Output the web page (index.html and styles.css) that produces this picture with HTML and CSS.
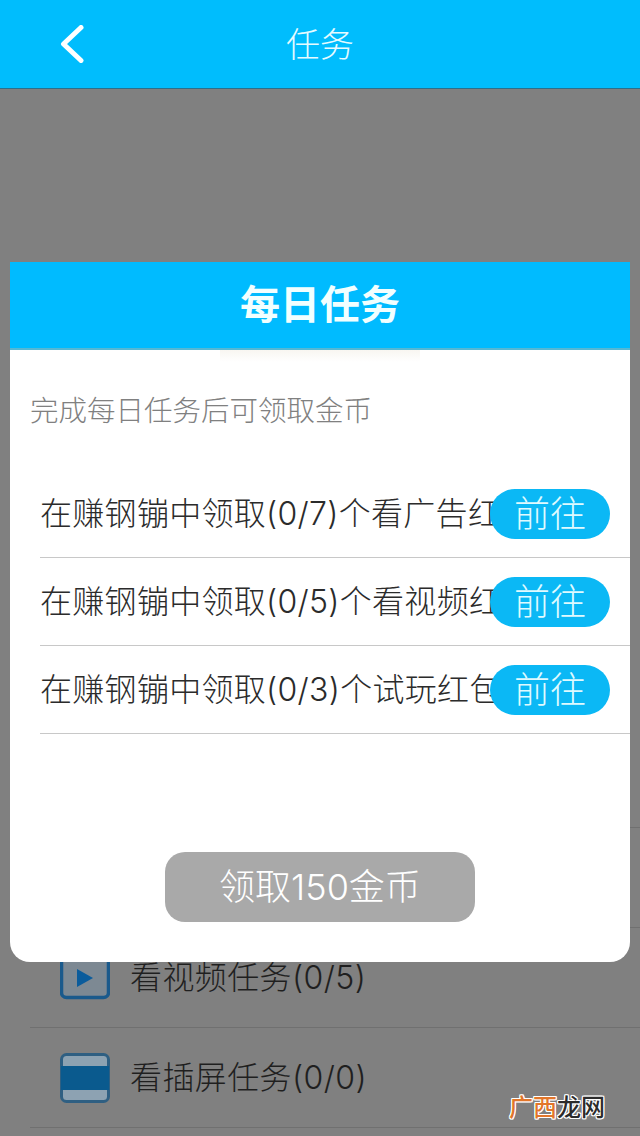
FILE: index.html
```html
<!DOCTYPE html>
<html lang="zh">
<head>
<meta charset="utf-8">
<title>任务</title>
<link rel="stylesheet" href="styles.css">
</head>
<body>
<div class="page">
  <header class="nav">
    <svg class="nav-back" width="24" height="38" viewBox="0 0 24 38"><path d="M21 2.5 3.5 19 21 35.500" fill="none" stroke="#fff" stroke-width="5" stroke-linecap="round" stroke-linejoin="round"/></svg>
    <h1 class="nav-title">任务</h1>
  </header>
  <div class="spacer"></div>
  <div class="task-row"><span class="task-label">看广告任务(0/7)</span></div>
  <div class="task-row">
    <svg class="task-icon" width="50" height="50" viewBox="0 0 50 50"><rect x="1.500" y="-3" width="47" height="47.500" rx="5" fill="#7d8993" stroke="#1a5a8c" stroke-width="3.500"/><path d="M17 16v18l16-9z" fill="#0a5c9c"/></svg>
    <span class="task-label">看视频任务(0/5)</span>
  </div>
  <div class="task-row">
    <svg class="task-icon" width="50" height="50" viewBox="0 0 50 50"><rect x="1.500" y="1.500" width="47" height="47" rx="5" fill="#8da2b2" stroke="#2f5f82" stroke-width="3"/><rect x="1" y="13" width="48" height="24" fill="#0a5a8e"/></svg>
    <span class="task-label">看插屏任务(0/0)</span>
  </div>
  <section class="modal">
    <h2 class="modal-head">每日任务</h2>
    <p class="modal-note">完成每日任务后可领取金币</p>
    <ul class="modal-list">
      <li class="modal-item"><span class="item-text">在赚钢镚中领取(0/7)个看广告红包</span><span class="go">前往</span></li>
      <li class="modal-item"><span class="item-text">在赚钢镚中领取(0/5)个看视频红包</span><span class="go">前往</span></li>
      <li class="modal-item"><span class="item-text">在赚钢镚中领取(0/3)个试玩红包</span><span class="go">前往</span></li>
    </ul>
    <div class="claim">领取150金币</div>
  </section>
  <div class="mark"><span class="mark-a">广西</span><span class="mark-b">龙网</span></div>
</div>
</body>
</html>
```
FILE: styles.css
```css
* { box-sizing: border-box; }
html, body { margin: 0; padding: 0; }
body { font-family: Inter, "Noto Sans CJK SC", sans-serif; }
.page {
  position: relative;
  width: 640px;
  height: 1136px;
  overflow: hidden;
  background: #808080;
}
.nav {
  height: 89px;
  background: #00bdfd;
  border-bottom: 1px solid #2c6f8c;
  display: flex;
  align-items: center;
  justify-content: center;
  position: relative;
}
.nav-back { position: absolute; left: 60px; top: 25px; }
.nav-title {
  margin: 2px 0 0;
  font-size: 34px;
  font-weight: 300;
  color: #e6fbff;
  line-height: 86px;
}
.spacer { height: 739px; margin-left: 30px; border-bottom: 1px solid #707070; }
.task-row {
  height: 100px;
  margin-left: 30px;
  padding-left: 30px;
  border-bottom: 1px solid #707070;
  display: flex;
  align-items: center;
  gap: 20px;
}
.task-label { font-size: 32px; font-weight: 300; line-height: 44px; color: #1f1f1f; letter-spacing: 0.4px; }
.task-icon { flex: none; }
.modal {
  position: absolute;
  left: 10px;
  top: 262px;
  width: 620px;
  height: 700px;
  background: #fff;
  border-radius: 0 0 20px 20px;
  display: flex;
  flex-direction: column;
}
.modal-head {
  position: relative;
  margin: 0;
  height: 88px;
  background: #00bbff;
  border-bottom: 2px solid #55b8d4;
  color: #f2ffff;
  font-size: 40px;
  font-weight: 700;
  line-height: 86px;
  text-align: center;
}
.modal-head::after {
  content: "";
  position: absolute;
  left: 210px;
  top: 88px;
  width: 200px;
  height: 12px;
  background: linear-gradient(#f8f6f1, #fff);
}
.modal-note {
  margin: 41px 0 0 20px;
  height: 40px;
  font-size: 28.500px;
  font-weight: 300;
  line-height: 40px;
  color: #808080;
}
.modal-list {
  list-style: none;
  margin: 39px 0 0 30px;
  padding: 0;
}
.modal-item {
  height: 88px;
  padding-right: 20px;
  border-bottom: 1px solid #c8c8c8;
  display: flex;
  align-items: center;
}
.item-text {
  flex: 1;
  min-width: 0;
  white-space: nowrap;
  font-size: 32px;
  font-weight: 300;
  line-height: 44px;
  letter-spacing: 0.3px;
  color: #2b2b2b;
}
.go {
  position: relative;
  flex: none;
  width: 120px;
  height: 50px;
  border-radius: 25px;
  background: #0bb8f5;
  color: #dffaff;
  font-size: 36px;
  font-weight: 300;
  line-height: 50px;
  text-align: center;
}
.claim {
  align-self: center;
  margin-top: 118px;
  width: 310px;
  height: 70px;
  border-radius: 20px;
  background: #a9a9a9;
  color: #fff;
  font-size: 36px;
  font-weight: 300;
  line-height: 70px;
  text-align: center;
}
.mark {
  position: absolute;
  left: 509px;
  top: 1094px;
  font-size: 24px;
  line-height: 28px;
  font-weight: 500;
  text-shadow: 1px 0 #fff, -1px 0 #fff, 0 1px #fff, 0 -1px #fff, 1px 1px #fff, -1px -1px #fff, 1px -1px #fff, -1px 1px #fff;
}
.mark-a { color: #e2762a; }
.mark-b { color: #2b2b2b; }
```
